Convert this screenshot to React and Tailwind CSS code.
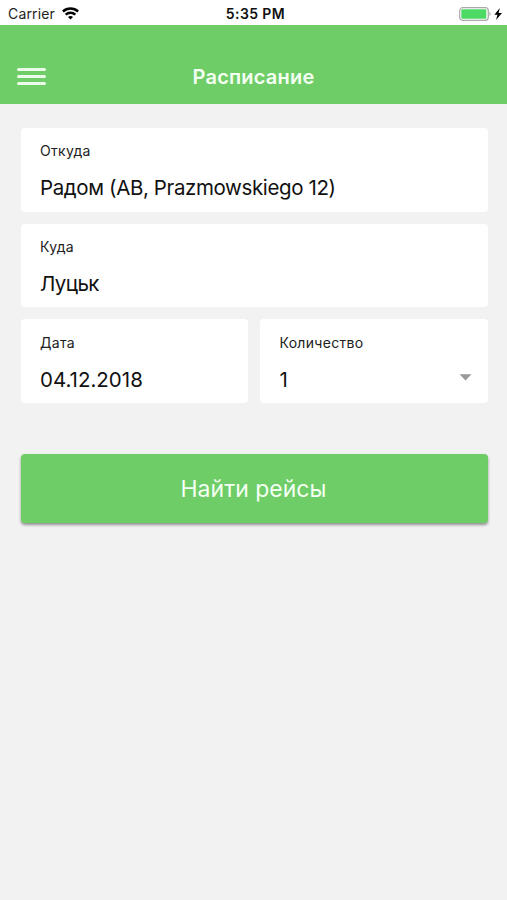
function WifiIcon() {
  return (
    <svg width="18" height="13" viewBox="0 0 18 13" fill="none" stroke="#000" strokeWidth="2.4">
      <path d="M0.9 4.5C5.3 0.5 11.7 0.5 16.1 4.5" />
      <path d="M3.6 7.6C6.4 5.1 10.6 5.1 13.4 7.6" />
      <path d="M8.5 12.4L6 9.9C7.4 8.6 9.6 8.6 11 9.9Z" fill="#000" stroke="none" />
    </svg>
  )
}

function BatteryIcon() {
  return (
    <svg width="44" height="14" viewBox="0 0 44 14">
      <rect x="0.7" y="0.7" width="28.6" height="12.6" rx="3" fill="#fff" stroke="#a9a9a9" strokeWidth="1.2" />
      <rect x="2.3" y="2.3" width="25" height="9.4" rx="1" fill="#4cd964" />
      <path d="M30.5 4.8C32 5.4 32 8.6 30.5 9.2Z" fill="#a9a9a9" />
      <path d="M40.8 1L35.4 7.8H38.5L37 13L43 6.1H39.6Z" fill="#000" />
    </svg>
  )
}

function StatusBar() {
  return (
    <div className="grid h-[25px] grid-cols-[1fr_auto_1fr] items-center bg-white pt-[2px] pr-[4px] pl-2 text-[14px] leading-[23px] text-[#222]">
      <div className="flex items-center gap-[7px]">
        <span className="tracking-[0.15px]">Carrier</span>
        <WifiIcon />
      </div>
      <span className="text-center font-semibold tracking-[0.4px] text-[#111]">5:35 PM</span>
      <div className="flex justify-end">
        <BatteryIcon />
      </div>
    </div>
  )
}

function Header() {
  return (
    <header className="grid h-[79px] grid-cols-[1fr_auto_1fr] items-center bg-[#6fcd67] px-[17px] pt-[24px]">
      <button type="button" aria-label="Меню" className="flex w-[29px] flex-col gap-[4px]">
        <span className="h-[3px] rounded-xs bg-[#eafbe9]" />
        <span className="h-[3px] rounded-xs bg-[#eafbe9]" />
        <span className="h-[3px] rounded-xs bg-[#eafbe9]" />
      </button>
      <h1 className="text-[20px] leading-6 font-semibold tracking-[0.2px] text-[#f4fff3]">Расписание</h1>
    </header>
  )
}

function Field({ label, children, tracking, arrow }) {
  return (
    <div className="flex h-[83.7px] flex-col rounded-[4px] bg-white pt-[13.4px] pr-5 pl-[19.5px]">
      <span className="text-[14px] leading-5 tracking-[0.3px] text-[#222]">{label}</span>
      <div className="mt-[14px] flex items-center justify-between text-[20.5px] leading-[26px] text-[#111]">
        <span className={`whitespace-nowrap ${tracking || ''}`}>{children}</span>
        {arrow && (
          <svg width="13" height="7" viewBox="0 0 13 7" className="-mt-[4px] -mr-[4px]">
            <path d="M0.5 0.3H12.5L6.5 6.5Z" fill="#999" />
          </svg>
        )}
      </div>
    </div>
  )
}

export default function App() {
  return (
    <div className="min-h-[900px] w-full bg-[#f2f2f2] font-[Inter,'Liberation_Sans',sans-serif]">
      <StatusBar />
      <Header />
      <main className="flex flex-col gap-3 pt-[24px] pr-[19.5px] pl-[20.5px]">
        <Field label="Откуда" tracking="tracking-[-0.38px]">Радом (АВ, Prazmowskiego 12)</Field>
        <Field label="Куда" tracking="tracking-[-0.6px]">Луцьк</Field>
        <div className="grid grid-cols-2 gap-3">
          <Field label="Дата">04.12.2018</Field>
          <Field label="Количество" arrow>1</Field>
        </div>
        <button
          type="button"
          className="mt-[39px] h-[68.5px] rounded-[4px] bg-[#6fcd67] pt-[2px] pr-px text-[23px] text-[#f4fff3] shadow-[0_2px_3px_rgba(0,0,0,0.4)]"
        >
          Найти рейсы
        </button>
      </main>
    </div>
  )
}
